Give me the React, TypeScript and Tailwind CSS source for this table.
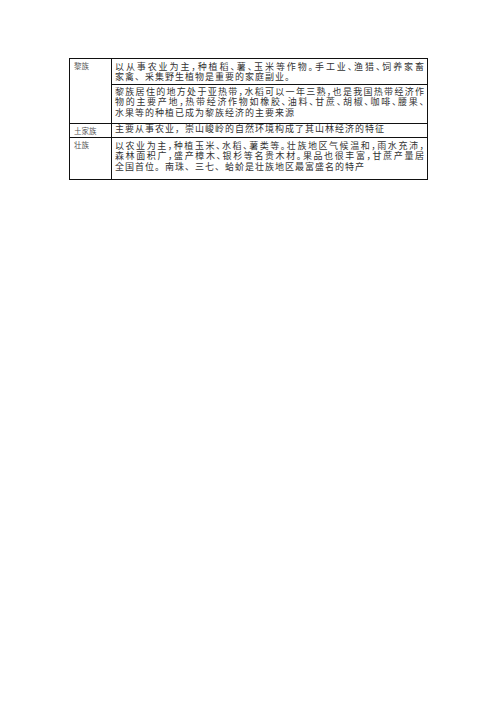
const ROWS = [
  {
    name: '黎族',
    span: 2,
    height: 'h-[26px]',
    pad: 'pt-[3px]',
    lines: [
      '以从事农业为主，种植稻、薯、玉米等作物。手工业、渔猎、饲养家畜',
      '家禽、采集野生植物是重要的家庭副业。',
    ],
  },
  {
    height: 'h-[39px]',
    pad: 'pt-[2px]',
    lines: [
      '黎族居住的地方处于亚热带，水稻可以一年三熟，也是我国热带经济作',
      '物的主要产地，热带经济作物如橡胶、油料、甘蔗、胡椒、咖啡、腰果、',
      '水果等的种植已成为黎族经济的主要来源',
    ],
  },
  {
    name: '土家族',
    span: 1,
    height: 'h-[12px]',
    pad: 'pt-[0px]',
    lines: ['主要从事农业，崇山峻岭的自然环境构成了其山林经济的特征'],
  },
  {
    name: '壮族',
    span: 1,
    height: 'h-[42px]',
    pad: 'pt-[3px]',
    lines: [
      '以农业为主，种植玉米、水稻、薯类等。壮族地区气候温和，雨水充沛，',
      '森林面积广，盛产樟木、银杉等名贵木材。果品也很丰富，甘蔗产量居',
      '全国首位。南珠、三七、蛤蚧是壮族地区最富盛名的特产',
    ],
  },
];

function TextLines({ lines }: { lines: string[] }) {
  return (
    <>
      {lines.map((line, i) => {
        const last = i === lines.length - 1;
        return (
          <div
            key={i}
            className={
              last
                ? 'whitespace-nowrap tracking-[1px]'
                : 'whitespace-nowrap text-justify [text-align-last:justify] [font-feature-settings:"halt"]'
            }
          >
            {line}
          </div>
        );
      })}
    </>
  );
}

export default function App() {
  return (
    <div className="w-[496px] h-[702px] bg-white pt-[58px] pl-[69px] font-['Liberation_Serif','Noto_Sans_CJK_SC',serif]">
      <table className="border-collapse border border-[#111] table-fixed w-[358px]">
        <colgroup>
          <col className="w-[42px]" />
          <col className="w-[316px]" />
        </colgroup>
        <tbody>
          {ROWS.map((row, i) => (
            <tr key={i} className={row.height}>
              {row.name && (
                <td
                  rowSpan={row.span}
                  className="border border-[#111] align-top pl-[4px] pt-[3px] text-[7.5px] leading-[10px] text-[#555]"
                >
                  {row.name}
                </td>
              )}
              <td
                className={`border border-[#111] align-top px-[3px] ${row.pad} text-[9px] leading-[10.4px] text-[#333]`}
              >
                <TextLines lines={row.lines} />
              </td>
            </tr>
          ))}
        </tbody>
      </table>
    </div>
  );
}
